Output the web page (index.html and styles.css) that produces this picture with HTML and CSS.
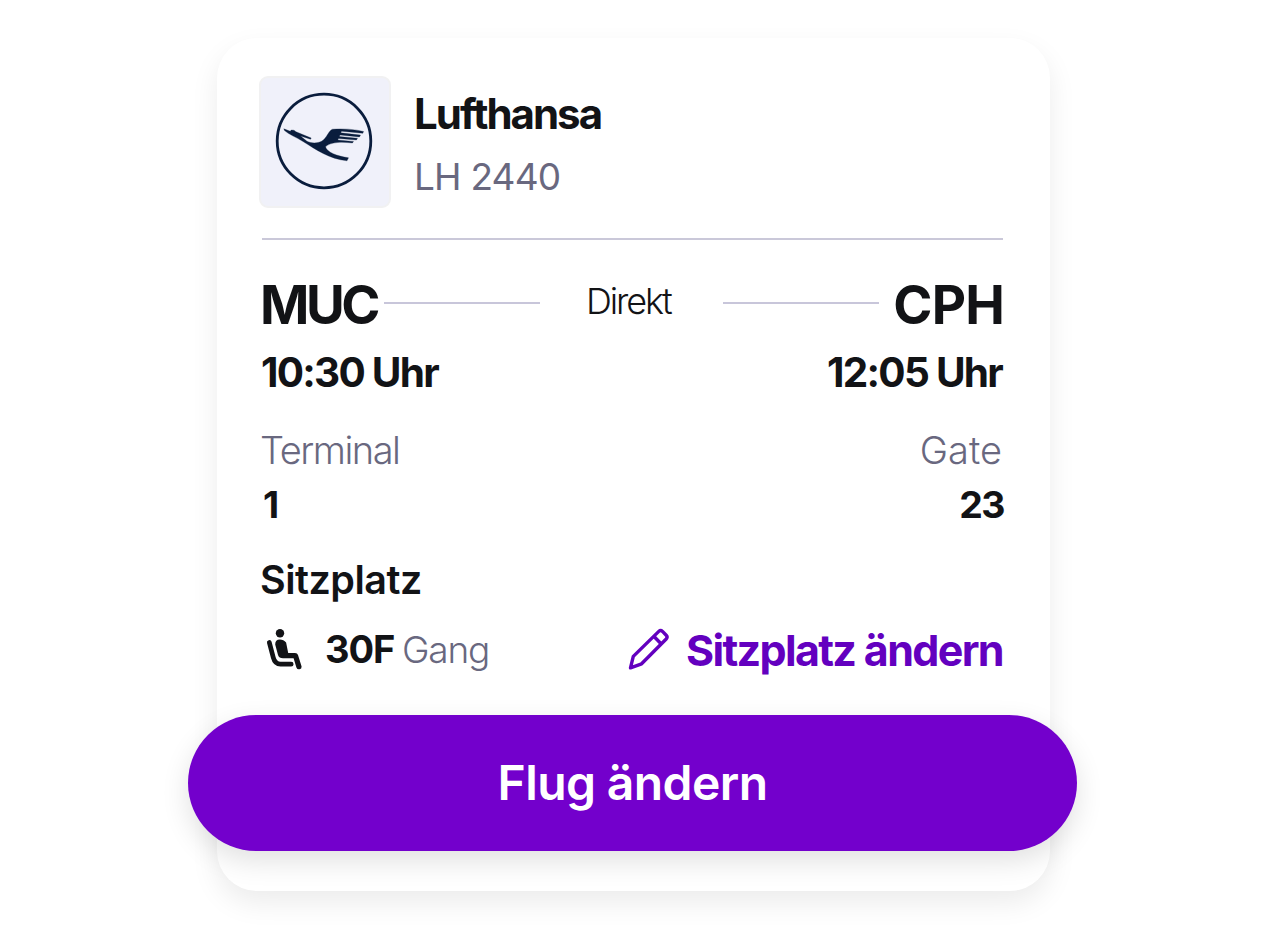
FILE: index.html
```html
<!DOCTYPE html>
<html lang="de">
<head>
<meta charset="utf-8">
<title>Flug ändern</title>
<link rel="stylesheet" href="styles.css">
</head>
<body>
<main class="card">
  <header class="airline">
    <div class="logo">
      <svg width="132" height="132" viewBox="0 0 132 132" aria-hidden="true">
        <g transform="translate(-9 -10)">
          <circle cx="74" cy="75" r="46.8" fill="none" stroke="#0a1d3d" stroke-width="2.8"/>
          <path fill="#0a1d3d" stroke="#0a1d3d" stroke-width=".3" d="M33.8 62.8 L40.3 65.3 L41.2 64 L44 64.2 L46 65.8 L61.2 72 L60.5 73.3 L50.5 70 L57 75.3 C62 77.6 67.5 77.2 71.5 75.3 C77 72.2 78.5 64.4 82.5 63.2 C92 62.4 105 63.1 113.6 65.5 L112.8 67.3 L91.5 65.2 L90.8 66.8 L110.5 69.1 L109.5 70.9 L90 69 L89.4 70.5 L107.5 72.2 L106.5 74 L88.5 72.5 L87.8 74 L103.5 75.4 L102.5 77 C93 76 81 75.5 75.5 80.8 C77 86.5 87 90 98.5 91.8 L97 94.8 C79 93 66 83.5 53 75.5 C45.5 70.9 39 68.5 34.5 64.6 Z"/>
        </g>
      </svg>
    </div>
    <div class="airline-text">
      <div class="name">Lufthansa</div>
      <div class="number">LH 2440</div>
    </div>
  </header>
  <div class="divider"></div>
  <section class="route">
    <span class="code from">MUC</span>
    <i class="line"></i>
    <span class="direct">Direkt</span>
    <i class="line"></i>
    <span class="code to">CPH</span>
  </section>
  <section class="row times"><span>10:30 Uhr</span><span>12:05 Uhr</span></section>
  <section class="row labels"><span>Terminal</span><span class="gate">Gate</span></section>
  <section class="row values"><span>1</span><span>23</span></section>
  <h2 class="title">Sitzplatz</h2>
  <section class="seat">
    <svg class="seat-icon" width="36" height="42" viewBox="0 0 36 42" aria-hidden="true" fill="#121316">
      <circle cx="14" cy="4.3" r="4.2"/>
      <path d="M9.2 15.5 Q9.2 10.4 13.8 10.4 Q17.6 10.4 20.1 13.6 L22.2 23.9 H29 Q31.4 23.9 32 26.1 L35.6 37.4 Q35.8 39.7 33.5 40.3 Q31.2 40.7 30.4 38.4 L27.6 29.3 H17 Q13 29.3 12 26 Z"/>
      <path d="M3.3 13.4 L7.3 28.7 Q9 35.2 14.5 35.2 H25.2" fill="none" stroke="#121316" stroke-width="4.7" stroke-linecap="round"/>
    </svg>
    <span class="seat-number">30F</span>
    <span class="seat-kind">Gang</span>
    <a class="edit">
      <svg width="44" height="44" viewBox="0 0 44 44" fill="none" stroke="#6300bf" stroke-width="3.4" stroke-linejoin="round" aria-hidden="true">
        <path d="M3.5 39.8 L6.3 28.4 L31.8 3.4 Q33.6 1.7 35.5 3.4 L39.2 7.2 Q41 9.1 39.2 11 L14.6 35.8 Z"/>
        <path d="M27 8.5 L34.3 16"/>
      </svg>
      <span class="edit-text">Sitzplatz ändern</span>
    </a>
  </section>
  <button class="change">Flug ändern</button>
</main>
</body>
</html>
```
FILE: styles.css
```css
* { box-sizing: border-box; }
body {
  margin: 0;
  height: 952px;
  overflow: hidden;
  padding: 38px 0 0 217px;
  background: #fff;
  color: #121316;
  font-family: Inter, "Liberation Sans", sans-serif;
  font-weight: 650;
  white-space: nowrap;
}
.card {
  display: flex;
  flex-direction: column;
  width: 833px;
  height: 853px;
  padding: 38px 47px 0 45px;
  border-radius: 40px;
  background: #fff;
  box-shadow: 0 12px 28px rgba(0, 0, 0, .08);
}
.airline { display: flex; gap: 23px; height: 132px; margin-left: -3px; }
.logo {
  width: 132px;
  height: 132px;
  border: 2px solid #f1f1f2;
  border-radius: 9px;
  background: #f0f1fa;
}
.logo svg { display: block; margin: -2px; }
.airline-text { padding-top: 5px; }
.name { height: 64px; line-height: 65px; font-size: 42px; letter-spacing: -2px; }
.number { height: 63px; line-height: 63px; font-size: 37px; font-weight: 400; letter-spacing: -.8px; color: #69687f; }
.divider { height: 2px; margin-top: 30px; background: #cac8d9; flex-shrink: 0; }
.route { display: flex; align-items: center; height: 67px; margin-top: 31px; }
.code { padding-top: 2px; font-size: 53px; line-height: 67px; letter-spacing: -3.5px; }
.from { width: 124px; margin-left: -2px; }
.line { width: 156px; height: 2px; margin-top: -3px; background: #c8c6da; flex-shrink: 0; }
.direct { width: 183px; margin-top: -7px; padding-left: 46px; font-size: 36px; font-weight: 300; letter-spacing: -2.1px; }
.to { margin-left: auto; margin-right: -1px; letter-spacing: -.8px; }
.row { display: flex; justify-content: space-between; }
.times { height: 69px; line-height: 69px; font-size: 40.5px; letter-spacing: -1.75px; margin-right: 1px; margin-left: -1px; }
.labels { height: 53px; margin: 17px 1px 0 -2px; line-height: 53px; font-size: 38px; font-weight: 350; letter-spacing: -1.5px; color: #69687f; }
.gate { letter-spacing: 0; }
.values { height: 55px; line-height: 55px; font-size: 37.5px; letter-spacing: -1.5px; margin: 0 -1px 0 1px; }
.title { height: 53px; margin: 21px 0 0 -2px; padding-top: 1px; line-height: 53px; font-size: 39.5px; font-weight: 570; letter-spacing: -.5px; }
.seat { display: flex; align-items: center; height: 87px; line-height: 87px; }
.seat-icon { margin-left: 4px; margin-right: 23px; }
.seat-number { width: 77px; font-size: 38px; letter-spacing: -1.1px; }
.seat-kind { font-size: 37px; font-weight: 300; letter-spacing: -1.2px; color: #69687f; }
.edit { display: flex; align-items: center; gap: 15px; margin-left: auto; color: #6300bf; }
.edit-text { padding-top: 2px; font-size: 43px; letter-spacing: -1.65px; }
.change {
  width: 889px;
  height: 136px;
  margin: 22px 0 0 -74px;
  padding: 0;
  border: 0;
  border-radius: 68px;
  background: #7300cc;
  color: #fff;
  font: 570 48px/136px Inter, "Liberation Sans", sans-serif;
  letter-spacing: -.6px;
  box-shadow: 0 10px 28px rgba(0, 0, 0, .12);
  flex-shrink: 0;
}
```
